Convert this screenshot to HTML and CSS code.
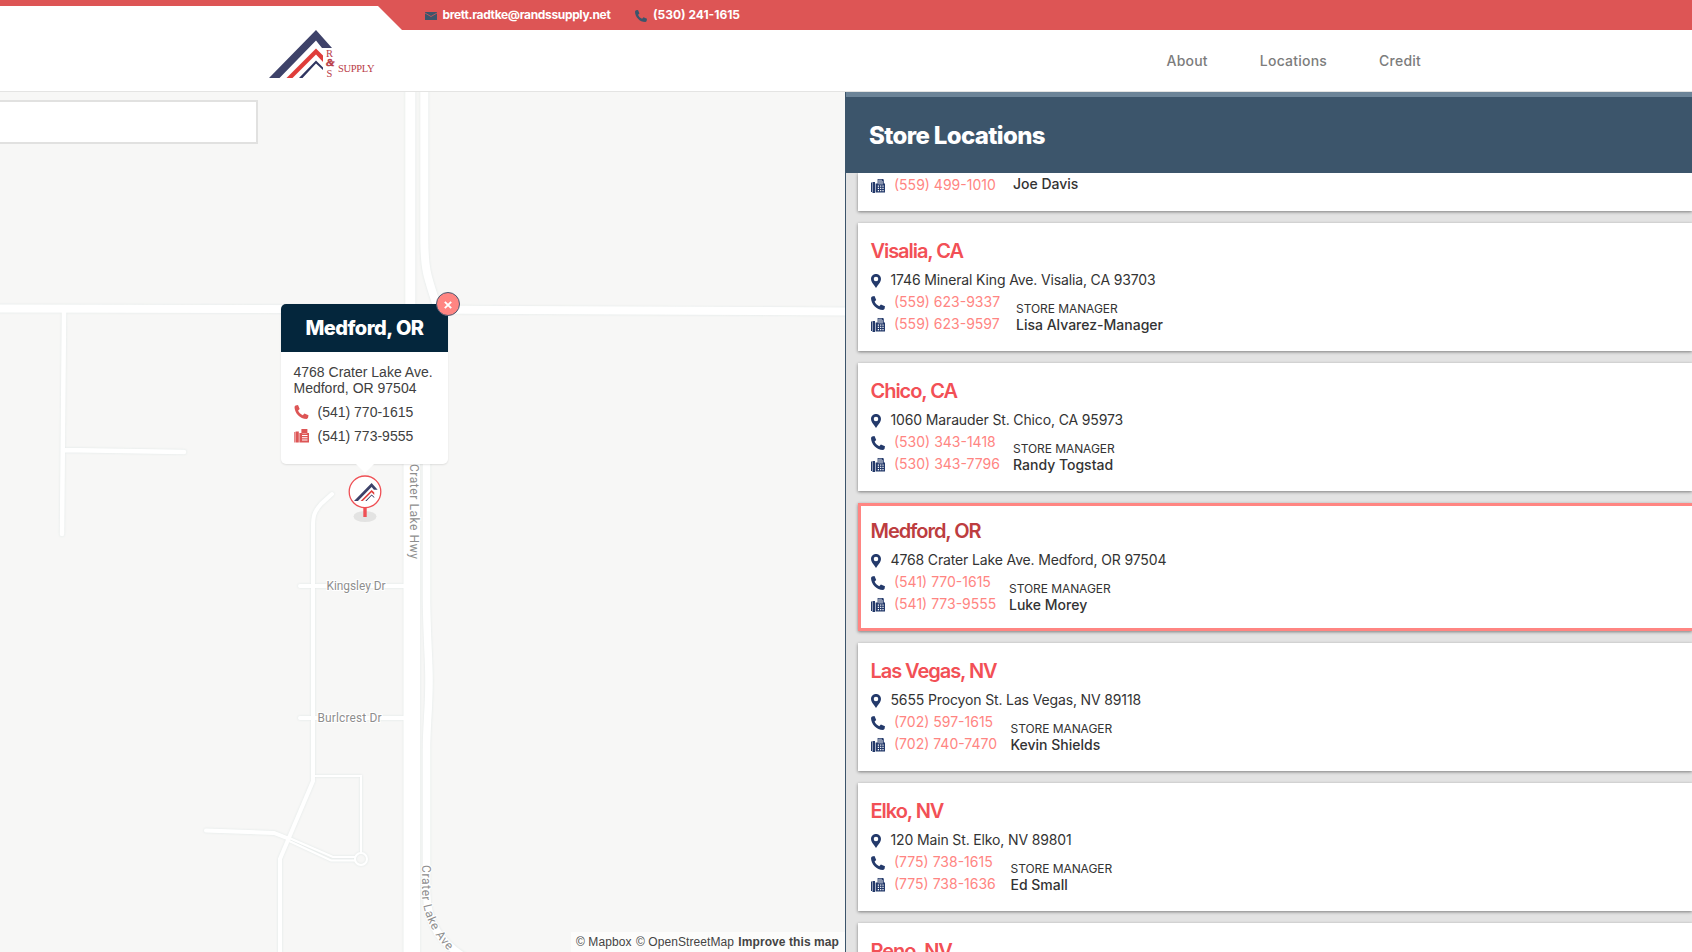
FILE: index.html
```html
<!DOCTYPE html>
<html lang="en">
<head>
<meta charset="utf-8">
<title>R&amp;S Supply – Store Locations</title>
<link rel="stylesheet" href="styles.css">
</head>
<body>
<svg class="defs" aria-hidden="true">
  <symbol id="phone" viewBox="0 0 14 14"><path d="M1 .4 3.500 0l1.700 4-1.600 1.500c.8 2.200 2.400 3.700 4.700 4.700l1.600-1.700 4.100 1.700-.5 2.800-1.400 1C5.500 14 0 8 0 1.700z"/></symbol>
  <symbol id="fax" viewBox="0 0 14 14"><path fill-rule="evenodd" d="M0 3.500h1V13H0zM1.500 3H4v11H1.500zM4.600 4.500h2V0H12l.8.8V4.500H14V13.500H4.600zM7.400.8V5.200H12V2h-1.200V.8zM6.800 6.500v1.200H8V6.500zm2.300 0v1.200h1.200V6.500zm2.300 0v1.200h1.200V6.500zM6.800 8.800V10H8V8.800zm2.300 0V10h1.200V8.800zm2.300 0V10h1.200V8.800zM6.800 11v1.200H8V11zm2.300 0v1.200h1.200V11zm2.300 0v1.200h1.200V11z"/><path opacity=".55" d="M7.400.8h3.400V2H12v3.200H7.400z"/></symbol>
  <symbol id="fax-solid" viewBox="0 0 15 14"><path fill-rule="evenodd" d="M.3 3h.9v10.500H.3zM1.600 2.500h3.200V13.500H1.600zM5.400 4h2V0h6v4H15v9.500H5.400zM8 6v1h5.500V6zm0 2.300v1h5.500v-1zm0 2.300v1h5.500v-1z"/><path fill="#f0a3a1" d="M8.300 4.200h4.400v.8H8.300z"/></symbol>
  <symbol id="pin" viewBox="0 0 10 14"><path fill-rule="evenodd" d="M5 0c2.900 0 5 2.200 5 5 0 2.700-1.800 4.500-3.300 6.400L5 14l-1.700-2.600C1.800 9.500 0 7.700 0 5c0-2.800 2.100-5 5-5zm0 2.700A2.300 2.300 0 1 0 5 7.300 2.300 2.300 0 0 0 5 2.700z"/></symbol>
  <symbol id="roof" viewBox="0 0 64 48"><path fill="#3e4269" d="M0 48 47 0 63 18H53L47 10.500 10.500 48z"/><path fill="#df3d3a" d="M17.500 48 47 18.500l7 7v6.500l-7-7.500L23.500 48z"/><path fill="#2f3560" d="M30 48 47 30.500l7 7V40l-7-6.500L33.500 48z"/></symbol>
</svg>

<header class="header">
  <div class="topbar">
    <div class="topbar-cut"></div>
    <a class="contact contact-mail"><svg class="mail-icon" viewBox="0 0 12 8"><path fill="#3c556b" d="M0 0h12v8H0z"/><path fill="none" stroke="#dd5555" stroke-width=".8" d="m0 1 6 3.500L12 1"/></svg><span>brett.radtke@randssupply.net</span></a>
    <a class="contact contact-phone"><svg class="top-phone"><use href="#phone"/></svg><span>(530) 241-1615</span></a>
  </div>
  <div class="nav-row">
    <svg class="logo" viewBox="0 0 108 50">
      <use href="#roof" width="64" height="48"/>
      <g font-family="Liberation Serif, serif" fill="#b93b46">
        <text x="57" y="27" font-size="10.500">R</text>
        <text x="57" y="36" font-size="11" font-weight="bold" font-style="italic" stroke="#b93b46" stroke-width=".5">&amp;</text>
        <text x="57.500" y="47" font-size="10.500">S</text>
        <text x="69" y="42" font-size="10.500" textLength="36.500">SUPPLY</text>
      </g>
    </svg>
    <nav class="nav"><a>About</a><a>Locations</a><a>Credit</a></nav>
  </div>
</header>

<main class="main">
  <section class="map">
    <svg class="roads" viewBox="0 92 845 860">
      <defs>
        <g id="road-lines">
          <path stroke-width="8" d="M0 308.500 420 309.500 845 311.500"/>
          <path stroke-width="4.500" d="M64 312 62 534M63 450l121 2"/>
          <path stroke-width="10" d="M410.300 92V465"/>
          <path stroke-width="16.500" d="M411.800 440V952"/>
          <path stroke-width="8" d="M424.300 92V240C424.500 272 428 278 437 306"/>
          <path stroke-width="7.500" d="M426.500 440V600C427 640 429 660 429 680 429 710 426.500 725 426.500 750V892C427 925 442 943 464 957"/>
          <path stroke-width="4" d="M332 494 321 504C314 512 313 516 313 527V781L280 859V952"/>
          <path stroke-width="4" d="M300 586H405M300 718H405"/>
          <path stroke-width="4" d="M206 830.500 274 833 287 838"/>
          <path stroke-width="2" d="M313 776H361V852M287 837 333 857H355M287 840 331 860.500H355"/>
          <circle cx="361" cy="859" r="6" stroke-width="2"/>
        </g>
      </defs>
      <use href="#road-lines" class="road-edge"/>
      <use href="#road-lines" class="road-fill"/>
      <path id="ave" fill="none" d="M422 865V895C423 916 434 938 452 954"/>
      <g class="road-label">
        <text x="326.500" y="589.500" textLength="59">Kingsley Dr</text>
        <text x="317.500" y="721.500" textLength="64">Burlcrest Dr</text>
        <text transform="translate(410 464) rotate(90)" textLength="95">Crater Lake Hwy</text>
        <text><textPath href="#ave" textLength="93">Crater Lake Ave</textPath></text>
      </g>
    </svg>
    <div class="search"></div>
    <div class="popup">
      <h3 class="popup-title">Medford, OR</h3>
      <div class="popup-body">
        <p class="popup-address">4768 Crater Lake Ave.<br>Medford, OR 97504</p>
        <p class="popup-line"><svg><use href="#phone"/></svg>(541) 770-1615</p>
        <p class="popup-line"><svg><use href="#fax-solid"/></svg>(541) 773-9555</p>
      </div>
      <button class="popup-close"><svg viewBox="0 0 8 8"><path stroke="#fff" stroke-width="1.900" d="m.8.8 6.400 6.400m0-6.400L.8 7.200"/></svg></button>
    </div>
    <svg class="marker" viewBox="0 0 34 48">
      <ellipse cx="17" cy="41.500" rx="11.500" ry="5.500" fill="#e3e3e2"/>
      <path fill="#ef5055" d="M15.300 32h3.400v10h-3.400z"/>
      <circle cx="17" cy="16.800" r="15.800" fill="#fff" stroke="#ef5055" stroke-width="1.300"/>
      <use href="#roof" x="6" y="8" width="24" height="18"/>
    </svg>
    <div class="credits"><span>© Mapbox</span> <span>© OpenStreetMap</span> <b>Improve this map</b></div>
  </section>

  <section class="panel">
    <div class="panel-head"><h1>Store Locations</h1></div>
    <div class="list">
      <article class="card card-tail w142">
        <div class="people"><div class="numbers"><a><svg><use href="#fax"/></svg>(559) 499-1010</a></div><div class="manager"><b>Joe Davis</b></div></div>
      </article>
      <article class="card w145">
        <h2>Visalia, CA</h2>
        <p class="address"><svg><use href="#pin"/></svg>1746 Mineral King Ave. Visalia, CA 93703</p>
        <div class="people"><div class="numbers"><a><svg><use href="#phone"/></svg>(559) 623-9337</a><a><svg><use href="#fax"/></svg>(559) 623-9597</a></div><div class="manager"><small>Store Manager</small><b>Lisa Alvarez-Manager</b></div></div>
      </article>
      <article class="card w142">
        <h2>Chico, CA</h2>
        <p class="address"><svg><use href="#pin"/></svg>1060 Marauder St. Chico, CA 95973</p>
        <div class="people"><div class="numbers"><a><svg><use href="#phone"/></svg>(530) 343-1418</a><a><svg><use href="#fax"/></svg>(530) 343-7796</a></div><div class="manager"><small>Store Manager</small><b>Randy Togstad</b></div></div>
      </article>
      <article class="card w138 active">
        <h2>Medford, OR</h2>
        <p class="address"><svg><use href="#pin"/></svg>4768 Crater Lake Ave. Medford, OR 97504</p>
        <div class="people"><div class="numbers"><a><svg><use href="#phone"/></svg>(541) 770-1615</a><a><svg><use href="#fax"/></svg>(541) 773-9555</a></div><div class="manager"><small>Store Manager</small><b>Luke Morey</b></div></div>
      </article>
      <article class="card">
        <h2>Las Vegas, NV</h2>
        <p class="address"><svg><use href="#pin"/></svg>5655 Procyon St. Las Vegas, NV 89118</p>
        <div class="people"><div class="numbers"><a><svg><use href="#phone"/></svg>(702) 597-1615</a><a><svg><use href="#fax"/></svg>(702) 740-7470</a></div><div class="manager"><small>Store Manager</small><b>Kevin Shields</b></div></div>
      </article>
      <article class="card">
        <h2>Elko, NV</h2>
        <p class="address"><svg><use href="#pin"/></svg>120 Main St. Elko, NV 89801</p>
        <div class="people"><div class="numbers"><a><svg><use href="#phone"/></svg>(775) 738-1615</a><a><svg><use href="#fax"/></svg>(775) 738-1636</a></div><div class="manager"><small>Store Manager</small><b>Ed Small</b></div></div>
      </article>
      <article class="card"><h2>Reno, NV</h2></article>
    </div>
  </section>
</main>
</body>
</html>
```

FILE: styles.css
```css
* { box-sizing: border-box; }
body {
  margin: 0;
  height: 952px;
  display: flex;
  flex-direction: column;
  overflow: hidden;
  background: #fff;
  color: #333;
  font-family: Inter, "Liberation Sans", sans-serif;
}
h1, h2, h3, p { margin: 0; }
svg { display: block; flex: none; }
.defs { position: absolute; width: 0; height: 0; }

.header { height: 92px; flex: none; border-bottom: 1px solid #e4e4e3; }
.topbar {
  height: 30px;
  display: flex;
  background: #dd5555;
  color: #fff;
  font-size: 12px;
  font-weight: 700;
  line-height: 30px;
}
.topbar-cut {
  width: 402px;
  height: 24px;
  margin-top: 6px;
  background: #fff;
  clip-path: polygon(0 0, 378px 0, 402px 100%, 0 100%);
}
.contact { display: flex; align-items: center; white-space: nowrap; }
.contact-mail { width: 210px; margin-left: 23px; gap: 5.500px; letter-spacing: -.34px; }
.contact-phone { gap: 6px; letter-spacing: 0; }
.mail-icon { width: 12px; height: 8px; margin-top: 2px; }
.top-phone { width: 12px; height: 12px; margin-top: 2px; fill: #3c556b; }
.nav-row { height: 61px; display: flex; justify-content: space-between; padding: 0 271px 0 269px; }
.logo { width: 108px; height: 50px; }
.nav { display: flex; gap: 52px; align-items: center; color: #7c7c7c; font-size: 14px; font-weight: 450; letter-spacing: .22px; }

.main { flex: 1; min-height: 0; display: flex; }
.map { position: relative; width: 845px; flex: none; overflow: hidden; background: #f7f7f6; }
.roads { width: 845px; height: 860px; }
.road-edge { fill: none; stroke: #eef1f0; stroke-linecap: round; filter: drop-shadow(0 0 1px #dfe6e5); }
.road-fill { fill: none; stroke: #fff; stroke-linecap: round; }
.road-label { fill: #8e8e8e; font: 12px Roboto, "Open Sans", sans-serif; stroke: #fff; stroke-width: 2px; paint-order: stroke; }
.search {
  position: absolute;
  top: 8px;
  left: -2px;
  width: 260px;
  height: 44px;
  background: #fff;
  border: 2px solid #e1e1e0;
}
.popup {
  position: absolute;
  left: 281px;
  top: 212px;
  width: 167px;
  height: 160px;
  background: #fff;
  border-radius: 5px;
  box-shadow: 0 1px 2px rgba(0, 0, 0, .1);
  font-family: "Liberation Sans", Arial, sans-serif;
  color: #404040;
}
.popup::after {
  content: "";
  position: absolute;
  left: 74px;
  top: 159px;
  border: 10px solid transparent;
  border-top-color: #fff;
  border-bottom: 0;
}
.popup-title {
  height: 48px;
  background: #04263c;
  border-radius: 5px 5px 0 0;
  color: #fff;
  font: 800 20px/48px Inter, sans-serif;
  letter-spacing: -.5px;
  text-align: center;
}
.popup-body { padding: 12px 12px 0 12.500px; font-size: 14px; line-height: 16px; white-space: nowrap; }
.popup-line { display: flex; align-items: center; gap: 9px; margin-top: 8px; }
.popup-line svg { width: 15px; height: 14px; fill: #dd5555; }
.popup-close {
  position: absolute;
  left: 155px;
  top: -12px;
  width: 24px;
  height: 24px;
  display: flex;
  align-items: center;
  justify-content: center;
  padding: 2px 0 0;
  border: 1px solid #4a5a72;
  border-radius: 50%;
  background: #ff8582;
}
.popup-close svg { width: 8px; height: 8px; }
.marker { position: absolute; left: 348px; top: 382.500px; width: 34px; height: 48px; }
.credits {
  position: absolute;
  right: 0;
  bottom: 0;
  width: 274px;
  height: 20px;
  display: flex;
  justify-content: space-between;
  padding: 0 6px 0 5px;
  background: rgba(255, 255, 255, .6);
  color: #444;
  font: 12px/20px "Liberation Sans", Arial, sans-serif;
  letter-spacing: .08px;
  white-space: nowrap;
}

.panel { flex: 1; min-width: 0; display: flex; flex-direction: column; border-left: 1px solid #3c556b; background: #e3e3e3; overflow: hidden; }
.panel-head { height: 81px; flex: none; padding-left: 23px; background: #3c556b; border-top: 5px solid #6c8498; }
.panel-head h1 { color: #fff; font-size: 24px; font-weight: 800; line-height: 77px; letter-spacing: -.65px; }
.list { flex: 1; min-height: 0; overflow: hidden; display: flex; flex-direction: column; gap: 12px; padding-left: 12px; }
.card { height: 128px; flex: none; padding: 16px 13px 0; background: #fff; box-shadow: 0 1px 3px rgba(0, 0, 0, .45); white-space: nowrap; }
.card-tail { height: 38px; padding-top: 0; }
.card.active { padding: 13px 10px 0; border: 3px solid #ff8582; border-right: 0; }
.card h2 { margin-left: -.5px; color: #f25056; font-size: 20px; font-weight: 560; line-height: 24px; letter-spacing: -1.050px; }
.card.active h2 { color: #bd3d40; }
.address { display: flex; align-items: center; gap: 9.500px; height: 22px; margin-top: 5px; font-size: 14px; letter-spacing: -.14px; }
.address svg { width: 10px; height: 14px; margin-top: 3px; fill: #243a6b; }
.people { display: flex; }
.numbers { width: 139.500px; display: flex; flex-direction: column; }
.w145 .numbers { width: 145px; }
.w142 .numbers { width: 142px; }
.w138 .numbers { width: 138px; }
.numbers a { display: flex; align-items: center; gap: 9px; height: 22px; color: #ff8582; font-size: 14px; font-weight: 430; }
.numbers svg { width: 14px; height: 14px; margin-top: 3px; fill: #243a6b; }
.manager { display: flex; flex-direction: column; }
.manager small { margin-top: 12px; font-size: 12px; line-height: 14px; letter-spacing: -.07px; text-transform: uppercase; }
.manager b { font-size: 14px; font-weight: 500; line-height: 18px; }
.card-tail .manager b { line-height: 22px; }
```
